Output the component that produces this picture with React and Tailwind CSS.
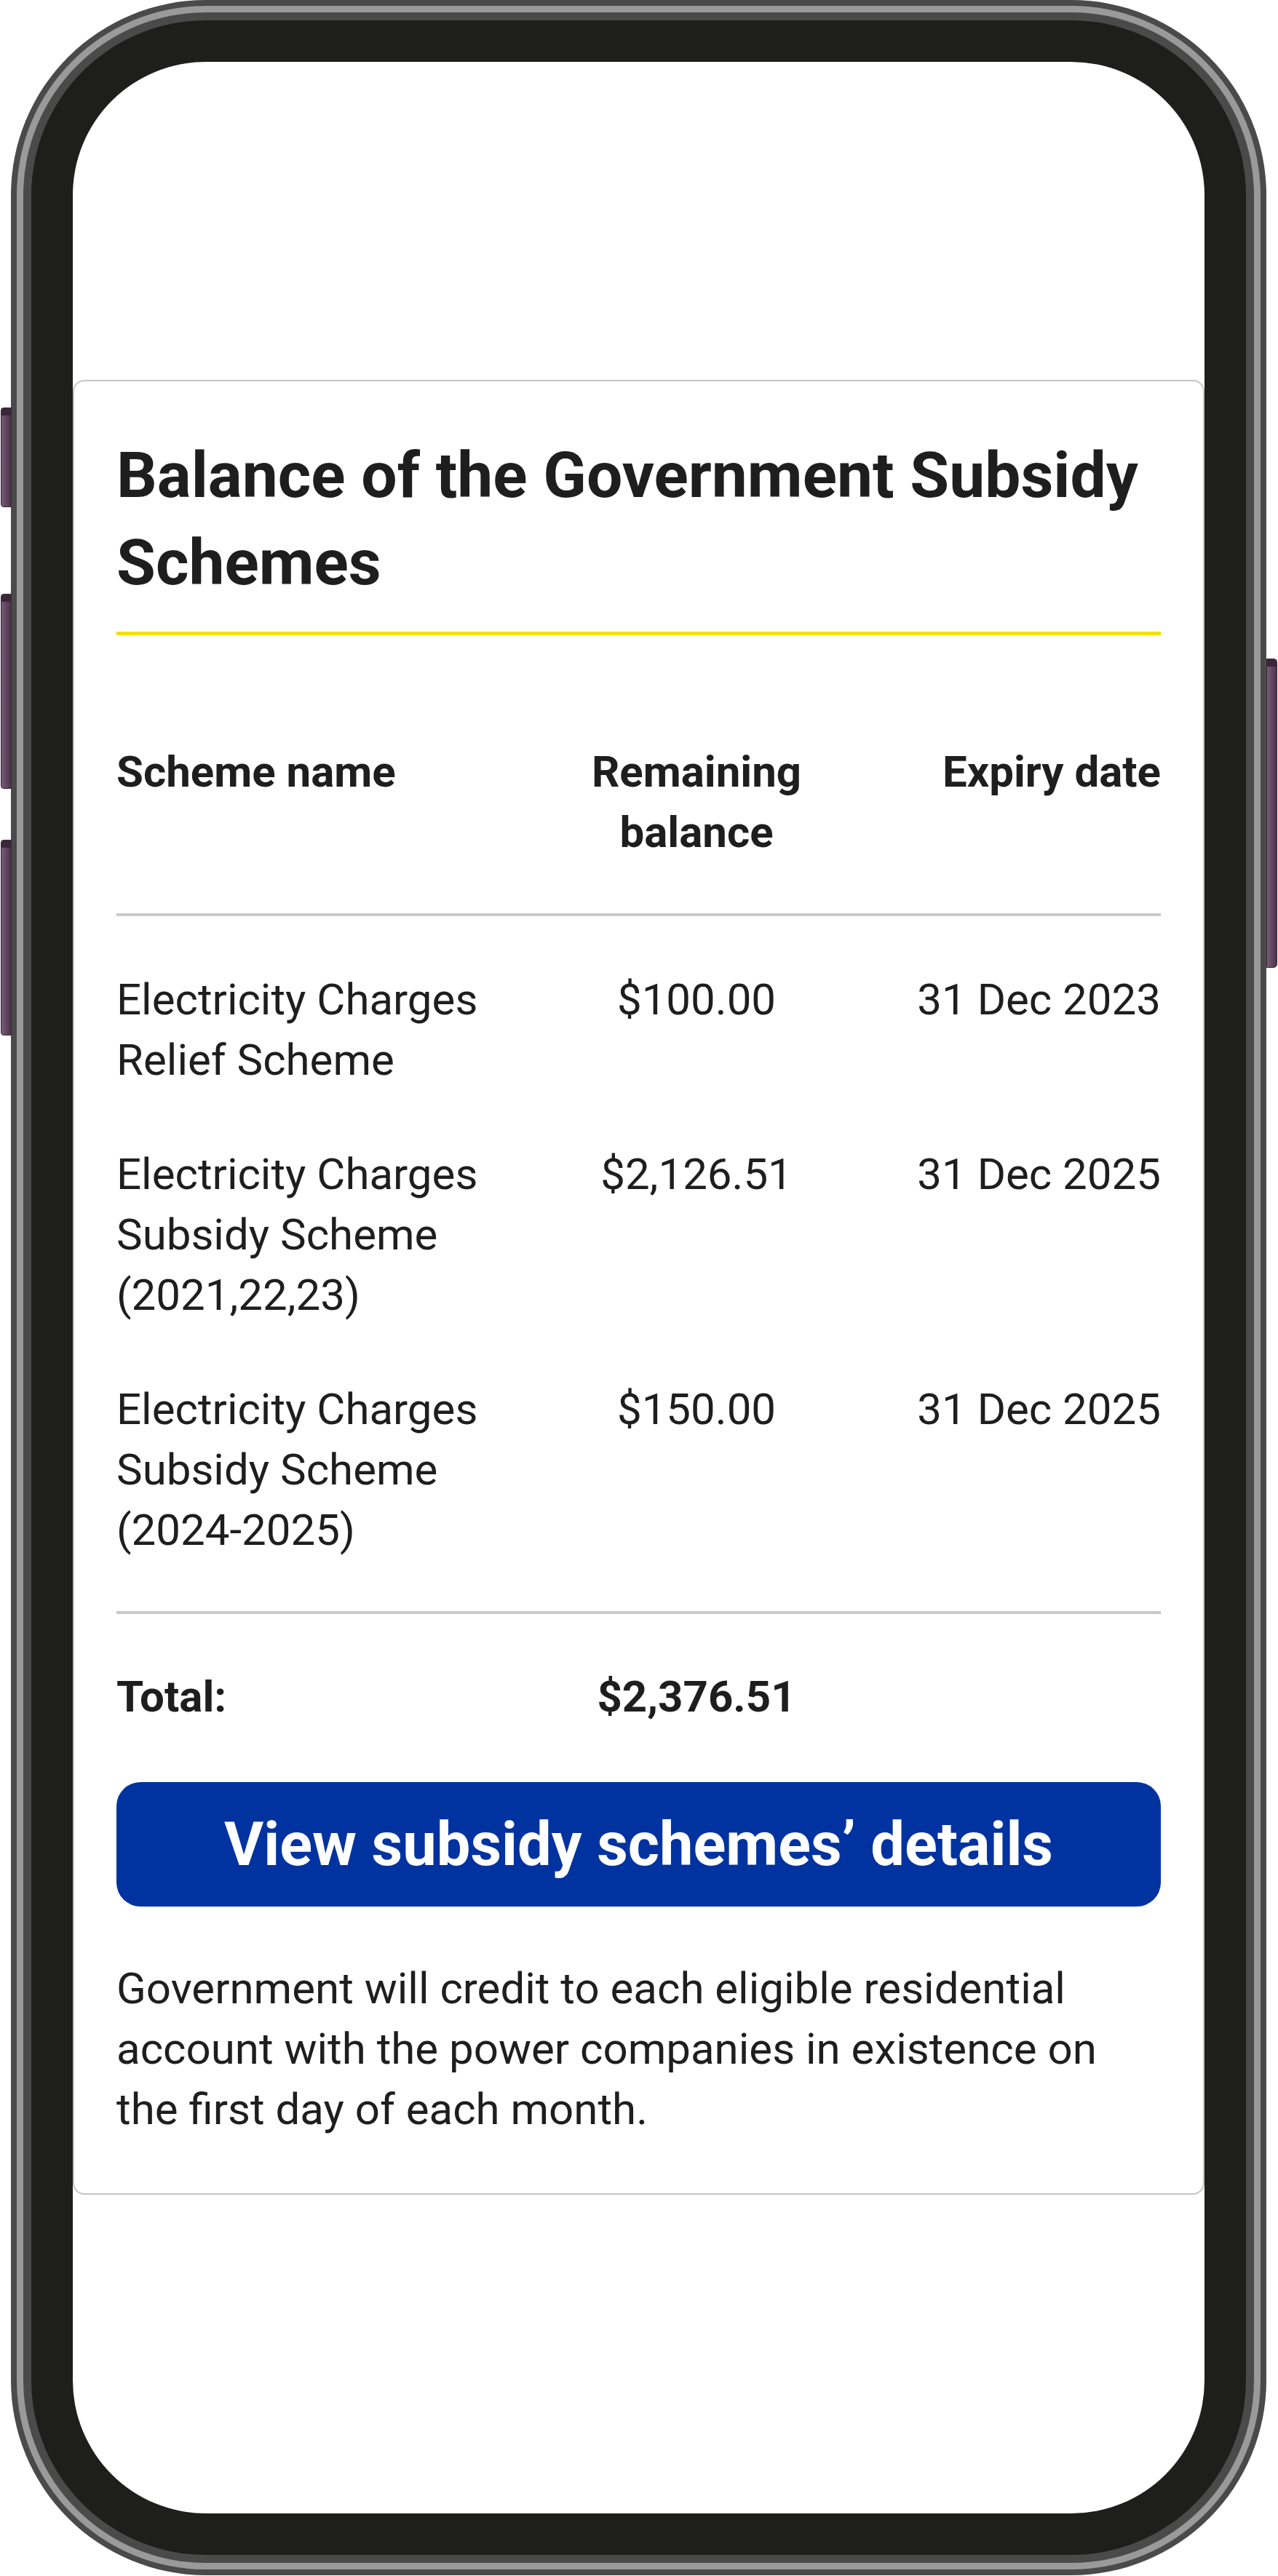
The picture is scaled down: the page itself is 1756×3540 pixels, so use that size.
const rows = [
  { name: "Electricity Charges Relief Scheme", amount: "$100.00", expiry: "31 Dec 2023" },
  { name: "Electricity Charges Subsidy Scheme (2021,22,23)", amount: "$2,126.51", expiry: "31 Dec 2025" },
  { name: "Electricity Charges Subsidy Scheme (2024-2025)", amount: "$150.00", expiry: "31 Dec 2025" },
];

const cols = "grid grid-cols-[560px_474px_1fr]";

const SideButton = ({ className }) => (
  <div
    className={`absolute w-[15px] border border-[#3a283a] bg-gradient-to-r from-[#7a5a78] to-[#4a344a] ${className}`}
  >
    <div className="h-[10px] bg-[#3a283a]" />
  </div>
);

const BalanceCard = () => {
  return (
    <div className="border-2 border-[#c4c4c4] rounded-[16px] bg-white px-[58px] pt-[69px] pb-[74px] text-[#1e1e1e]">
      <h2 className="text-[87.5px] leading-[120px] font-bold">
        Balance of the Government Subsidy Schemes
      </h2>
      <div className="mt-[35px] h-[5px] bg-[#f0e10a]" />

      {/* Header */}
      <div className={`${cols} mt-[146px] pb-[70px] border-b-4 border-[#c9c9c9] text-[60px] leading-[83px] font-bold`}>
        <div>Scheme name</div>
        <div className="text-center px-[10px]">Remaining balance</div>
        <div className="text-right">Expiry date</div>
      </div>

      {/* Rows */}
      <div className="flex flex-col gap-[74px] pt-[73px] pb-[70px] border-b-4 border-[#c9c9c9] text-[60px] leading-[83px]">
        {rows.map((r) => (
          <div key={r.name} className={cols}>
            <div className="pr-[20px]">{r.name}</div>
            <div className="text-center">{r.amount}</div>
            <div className="text-right">{r.expiry}</div>
          </div>
        ))}
      </div>

      {/* Total */}
      <div className={`${cols} mt-[72px] text-[60px] leading-[83px] font-bold`}>
        <div>Total:</div>
        <div className="text-center">$2,376.51</div>
        <div />
      </div>

      <button className="mt-[76px] w-full h-[171px] rounded-[33px] bg-[#0033a0] text-white text-[83px] font-bold leading-none">
        View subsidy schemes’ details
      </button>

      <p className="mt-[71px] text-[60px] leading-[83px]">
        Government will credit to each eligible residential account with the power companies in existence on the first day of each month.
      </p>
    </div>
  );
};

export default function App() {
  return (
    <div className="w-[1756px] h-[3540px] bg-white" style={{ fontFamily: "Roboto, 'Noto Sans', sans-serif" }}>
      <div className="relative ml-[15px] w-[1725px] h-[3539px]">
        {/* side buttons */}
        <SideButton className="-left-[14px] top-[560px] h-[137px] rounded-l-[4px]" />
        <SideButton className="-left-[14px] top-[816px] h-[268px] rounded-l-[4px]" />
        <SideButton className="-left-[14px] top-[1154px] h-[269px] rounded-l-[4px]" />
        <SideButton className="-right-[15px] top-[905px] h-[425px] rounded-r-[5px]" />

        {/* frame layers */}
        <div className="h-full rounded-[268px] bg-[#4a4a4a] p-[8px]">
          <div className="h-full rounded-[260px] bg-[#9a9a9a] p-[9px]">
            <div className="h-full rounded-[251px] bg-[#4a4a4a] p-[11px]">
              <div className="h-full rounded-[240px] bg-[#1e1e1c] p-[57px]">
                <div className="h-full rounded-[183px] bg-white overflow-hidden pt-[437px]">
                  <BalanceCard />
                </div>
              </div>
            </div>
          </div>
        </div>
      </div>
    </div>
  );
}
